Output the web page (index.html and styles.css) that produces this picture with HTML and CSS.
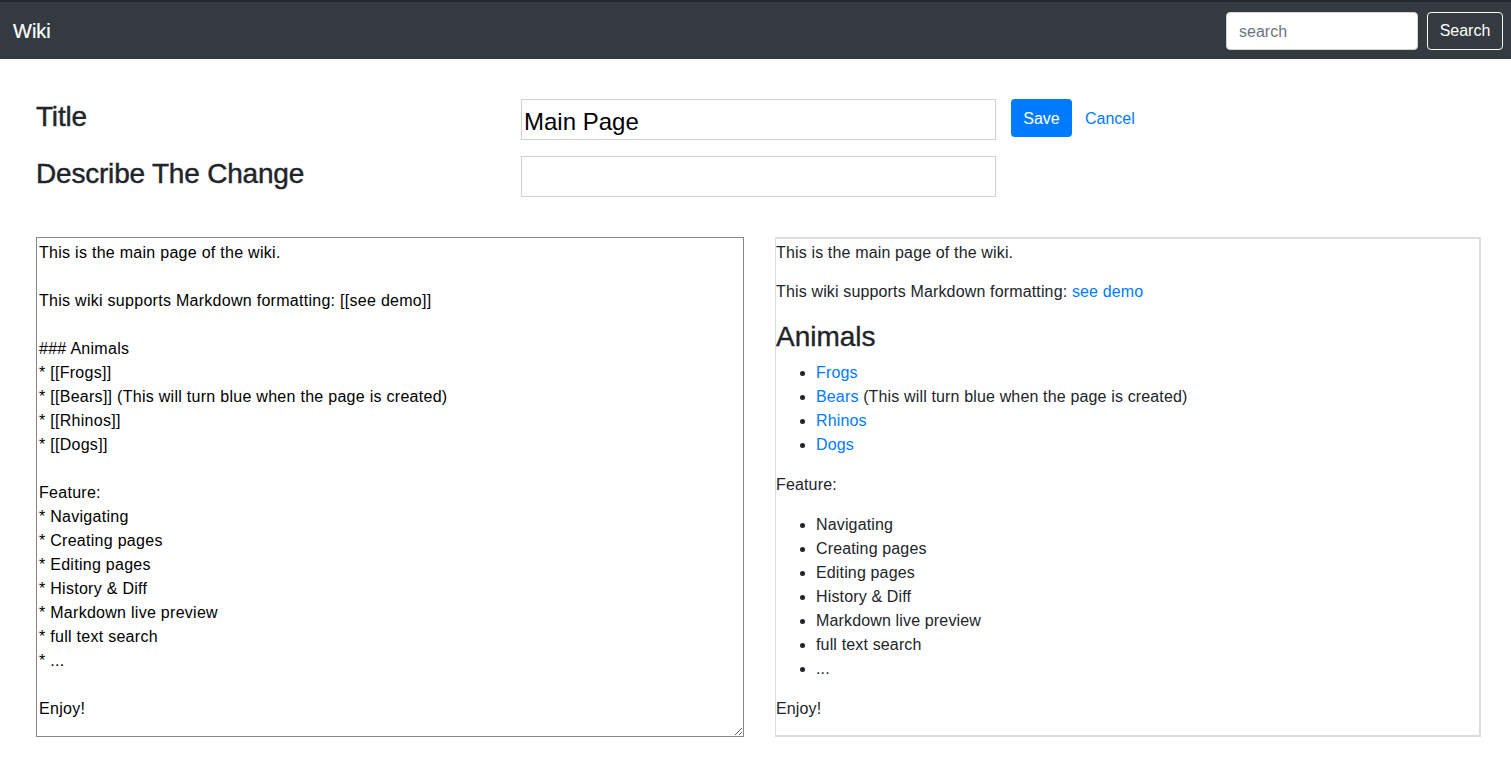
FILE: index.html
```html
<!DOCTYPE html>
<html lang="en">
<head>
<meta charset="utf-8">
<title>Wiki</title>
<link rel="stylesheet" href="styles.css">
</head>
<body>
<nav class="navbar">
  <a class="brand" href="#">Wiki</a>
  <form class="search-form">
    <input class="search-input" type="text" placeholder="search">
    <button class="search-btn" type="button">Search</button>
  </form>
</nav>
<main class="page">
  <div class="meta">
    <div class="meta-row">
      <h3 class="meta-label">Title</h3>
      <input class="meta-input title-input" type="text" value="Main Page">
      <div class="actions">
        <button class="btn-save" type="button">Save</button>
        <a class="cancel" href="#">Cancel</a>
      </div>
    </div>
    <div class="meta-row">
      <h3 class="meta-label">Describe The Change</h3>
      <input class="meta-input" type="text">
    </div>
  </div>
  <div class="editor">
    <textarea class="source">This is the main page of the wiki.

This wiki supports Markdown formatting: [[see demo]]

### Animals
* [[Frogs]]
* [[Bears]] (This will turn blue when the page is created)
* [[Rhinos]]
* [[Dogs]]

Feature:
* Navigating
* Creating pages
* Editing pages
* History &amp; Diff
* Markdown live preview
* full text search
* ...

Enjoy!</textarea>
    <div class="preview">
      <p class="first">This is the main page of the wiki.</p>
      <p>This wiki supports Markdown formatting: <a href="#">see demo</a></p>
      <h3>Animals</h3>
      <ul>
        <li><a href="#">Frogs</a></li>
        <li><a href="#">Bears</a> (This will turn blue when the page is created)</li>
        <li><a href="#">Rhinos</a></li>
        <li><a href="#">Dogs</a></li>
      </ul>
      <p>Feature:</p>
      <ul>
        <li>Navigating</li>
        <li>Creating pages</li>
        <li>Editing pages</li>
        <li>History &amp; Diff</li>
        <li>Markdown live preview</li>
        <li>full text search</li>
        <li>...</li>
      </ul>
      <p>Enjoy!</p>
    </div>
  </div>
</main>
</body>
</html>
```
FILE: styles.css
```css
* { box-sizing: border-box; }
html, body { margin: 0; padding: 0; }
body {
  font-family: "Liberation Sans", Arial, sans-serif;
  font-size: 16px;
  line-height: 1.5;
  color: #212529;
  background: #fff;
}
a { color: #007bff; text-decoration: none; }

.navbar {
  display: flex;
  align-items: center;
  justify-content: space-between;
  height: 59px;
  background: #343a40;
  border-top: 2px solid #25292d;
  padding: 0 8px 0 13px;
}
.brand {
  color: #fff;
  font-size: 20px;
  line-height: 30px;
  -webkit-text-stroke: 0.2px #fff;
}
.search-form { display: flex; align-items: center; gap: 9px; }
.search-input {
  width: 192px;
  height: 38px;
  border: 1px solid #ced4da;
  border-radius: 4px;
  padding: 7px 12px 5px;
  font: inherit;
  font-size: 16px;
  color: #495057;
  background: #fff;
}
.search-input::placeholder { color: #6c757d; }
.search-btn {
  height: 38px;
  width: 76px;
  border: 1px solid #f8f9fa;
  border-radius: 4px;
  background: transparent;
  color: #fff;
  font: inherit;
  font-size: 16px;
  padding: 1px 0 0;
}

.page { padding: 40px 30px 0 36px; }
.meta { display: flex; flex-direction: column; gap: 16px; }
.meta-row { display: flex; align-items: center; }
.meta-label {
  margin: 0 0 5px;
  width: 485px;
  font-size: 28px;
  font-weight: 500;
  line-height: 1.2;
  letter-spacing: -0.2px;
  color: #212529;
  -webkit-text-stroke: 0.45px #212529;
}
.meta-input {
  width: 475px;
  height: 41px;
  border: 1px solid #d0d0d0;
  padding: 4px 2px 0;
  font-family: "Liberation Sans", Arial, sans-serif;
  font-size: 24px;
  color: #000;
  background: #fff;
}
.actions { display: flex; align-items: center; gap: 13px; margin-left: 15px; align-self: flex-start; }
.btn-save {
  width: 61px;
  height: 38px;
  border: none;
  border-radius: 4px;
  background: #007bff;
  color: #fff;
  font: inherit;
  font-size: 16px;
  padding: 2px 0 0;
}
.cancel { font-size: 16px; padding-top: 2px; }

.editor {
  display: grid;
  grid-template-columns: 708px 706px;
  column-gap: 31px;
  margin-top: 40px;
}
.source {
  height: 500px;
  border: 1px solid #888;
  padding: 3px 2px 1px;
  font-family: "Liberation Sans", Arial, sans-serif;
  font-size: 16px;
  line-height: 24px;
  letter-spacing: 0.28px;
  color: #000;
  resize: vertical;
  margin: 0;
}
.preview {
  height: 500px;
  border: 2px solid #dcdcdc;
  border-left-width: 1px;
  padding: 2px 0 0 0;
  overflow: hidden;
  letter-spacing: 0.15px;
}
.preview p { margin: 0 0 16px; }
.preview p.first { margin-bottom: 15px; }
.preview h3 {
  margin: 0 0 7px;
  font-size: 28px;
  font-weight: 500;
  line-height: 1.2;
  letter-spacing: 0;
  -webkit-text-stroke: 0.35px #212529;
}
.preview ul { margin: 0 0 16px; padding-left: 40px; }
```
